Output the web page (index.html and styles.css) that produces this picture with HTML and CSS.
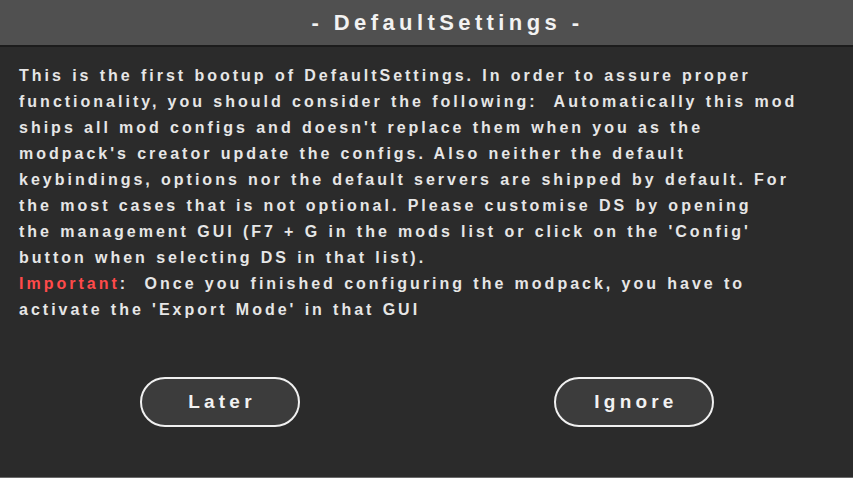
FILE: index.html
```html
<!DOCTYPE html>
<html lang="en">
<head>
    <meta charset="UTF-8">
    <title>DefaultSettings</title>
    <link rel="stylesheet" href="styles.css">
</head>
<body>
    <div class="screen">
        <div class="header">
            <h1>- DefaultSettings -</h1>
        </div>
        <div class="content">
            <p class="message">
                This is the first bootup of DefaultSettings. In order to assure proper<br>
                functionality, you should consider the following:&nbsp; Automatically this mod<br>
                ships all mod configs and doesn't replace them when you as the<br>
                modpack's creator update the configs. Also neither the default<br>
                keybindings, options nor the default servers are shipped by default. For<br>
                the most cases that is not optional. Please customise DS by opening<br>
                the management GUI (F7 + G in the mods list or click on the 'Config'<br>
                button when selecting DS in that list).<br>
                <span class="important">Important</span>:&nbsp; Once you finished configuring the modpack, you have to<br>
                activate the 'Export Mode' in that GUI
            </p>
            <div class="buttons">
                <button class="btn">Later</button>
                <button class="btn">Ignore</button>
            </div>
        </div>
    </div>
</body>
</html>
```

FILE: styles.css
```css
body {
    margin: 0;
    padding: 0;
    background-color: #2b2b2b;
    font-family: 'Liberation Sans', Arial, sans-serif;
    font-weight: bold;
    color: #e6e6e6;
    overflow: hidden;
}

.screen {
    width: 853px;
    height: 478px;
    display: flex;
    flex-direction: column;
    border-bottom: 1px solid #6a6a6a;
    box-sizing: border-box;
}

.header {
    height: 45px;
    background-color: #505050;
    border-bottom: 2px solid #1c1c1c;
    display: flex;
    justify-content: center;
    align-items: center;
}

.header h1 {
    margin: 0 0 0 42px;
    font-size: 22px;
    letter-spacing: 4.4px;
    color: #f2f2f2;
}

.content {
    flex: 1;
    display: flex;
    flex-direction: column;
}

.message {
    margin: 16px 0 0 19px;
    font-size: 16px;
    line-height: 26px;
    letter-spacing: 3px;
    word-spacing: 0.8px;
}

.important {
    color: #ff4a4a;
}

.buttons {
    display: flex;
    justify-content: space-between;
    padding: 0 139px 0 140px;
    margin-top: 54px;
}

.btn {
    width: 160px;
    height: 50px;
    border: 2px solid #f0f0f0;
    border-radius: 25px;
    background-color: #3c3c3c;
    color: #f2f2f2;
    font-family: 'Liberation Sans', Arial, sans-serif;
    font-weight: bold;
    font-size: 19px;
    letter-spacing: 4.2px;
    padding: 0 0 0 4px;
}
```
